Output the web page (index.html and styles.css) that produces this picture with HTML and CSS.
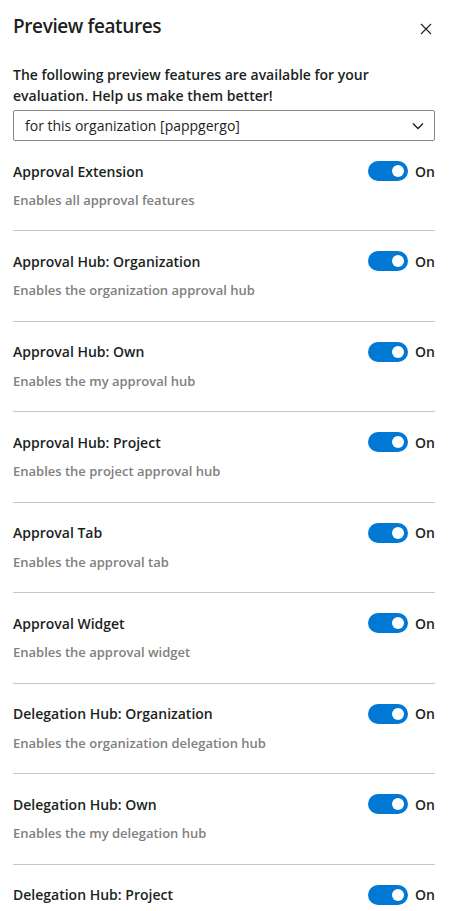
FILE: index.html
```html
<!DOCTYPE html>
<html lang="en">
<head>
    <meta charset="UTF-8">
    <meta name="viewport" content="width=device-width, initial-scale=1.0">
    <title>Preview features</title>
    <link rel="stylesheet" href="styles.css">
</head>
<body>
    <div class="panel">
        <div class="header">
            <div class="title">Preview features</div>
            <button class="close" aria-label="Close">
                <svg width="12" height="12" viewBox="0 0 12 12"><path d="M1 1 L11 11 M11 1 L1 11" stroke="#201f1e" stroke-width="1.1" fill="none"/></svg>
            </button>
        </div>

        <p class="intro">The following preview features are available for your evaluation. Help us make them better!</p>

        <div class="dropdown">
            <span>for this organization [pappgergo]</span>
            <svg width="14" height="14" viewBox="0 0 14 14"><path d="M2 4.5 L7 9.5 L12 4.5" stroke="#201f1e" stroke-width="1.4" fill="none"/></svg>
        </div>

        <div class="features">
            <div class="feature">
                <div class="feature-head">
                    <div class="feature-name">Approval Extension</div>
                    <div class="toggle"><span class="track"><span class="knob"></span></span>On</div>
                </div>
                <div class="feature-desc">Enables all approval features</div>
            </div>
            <div class="feature">
                <div class="feature-head">
                    <div class="feature-name">Approval Hub: Organization</div>
                    <div class="toggle"><span class="track"><span class="knob"></span></span>On</div>
                </div>
                <div class="feature-desc">Enables the organization approval hub</div>
            </div>
            <div class="feature">
                <div class="feature-head">
                    <div class="feature-name">Approval Hub: Own</div>
                    <div class="toggle"><span class="track"><span class="knob"></span></span>On</div>
                </div>
                <div class="feature-desc">Enables the my approval hub</div>
            </div>
            <div class="feature">
                <div class="feature-head">
                    <div class="feature-name">Approval Hub: Project</div>
                    <div class="toggle"><span class="track"><span class="knob"></span></span>On</div>
                </div>
                <div class="feature-desc">Enables the project approval hub</div>
            </div>
            <div class="feature">
                <div class="feature-head">
                    <div class="feature-name">Approval Tab</div>
                    <div class="toggle"><span class="track"><span class="knob"></span></span>On</div>
                </div>
                <div class="feature-desc">Enables the approval tab</div>
            </div>
            <div class="feature">
                <div class="feature-head">
                    <div class="feature-name">Approval Widget</div>
                    <div class="toggle"><span class="track"><span class="knob"></span></span>On</div>
                </div>
                <div class="feature-desc">Enables the approval widget</div>
            </div>
            <div class="feature">
                <div class="feature-head">
                    <div class="feature-name">Delegation Hub: Organization</div>
                    <div class="toggle"><span class="track"><span class="knob"></span></span>On</div>
                </div>
                <div class="feature-desc">Enables the organization delegation hub</div>
            </div>
            <div class="feature">
                <div class="feature-head">
                    <div class="feature-name">Delegation Hub: Own</div>
                    <div class="toggle"><span class="track"><span class="knob"></span></span>On</div>
                </div>
                <div class="feature-desc">Enables the my delegation hub</div>
            </div>
            <div class="feature">
                <div class="feature-head">
                    <div class="feature-name">Delegation Hub: Project</div>
                    <div class="toggle"><span class="track"><span class="knob"></span></span>On</div>
                </div>
            </div>
        </div>
    </div>
</body>
</html>
```

FILE: styles.css
```css
body {
    margin: 0;
    padding: 0;
    background-color: #ffffff;
    font-family: "Open Sans", "Noto Sans", sans-serif;
    color: #201f1e;
    overflow: hidden;
}

.panel {
    padding: 0 19px 0 13px;
}

.header {
    display: flex;
    justify-content: space-between;
    align-items: center;
    height: 54px;
}

.title {
    font-size: 19px;
    font-weight: 600;
    letter-spacing: -0.4px;
    margin-top: -2px;
}

.close {
    background-color: transparent;
    border: none;
    padding: 0;
    margin: 4px 3px 0 0;
    display: flex;
    cursor: pointer;
}

.intro {
    margin: 10px 0 4px;
    font-size: 14px;
    font-weight: 600;
    line-height: 21px;
}

.dropdown {
    height: 29px;
    border: 1px solid #8a8886;
    border-radius: 2px;
    display: flex;
    justify-content: space-between;
    align-items: center;
    padding: 0 10px 0 11px;
    font-size: 14px;
}

.dropdown svg {
    margin-right: -1px;
}

.feature {
    padding: 20px 0;
    border-bottom: 1px solid #c8c6c4;
}

.feature-head {
    display: flex;
    justify-content: space-between;
    align-items: center;
    height: 20px;
}

.feature-name {
    font-size: 14px;
    font-weight: 600;
}

.toggle {
    display: flex;
    align-items: center;
    gap: 7px;
    font-size: 14px;
    font-weight: 600;
}

.track {
    width: 40px;
    height: 20px;
    border-radius: 10px;
    background-color: #0078d4;
    display: flex;
    align-items: center;
    justify-content: flex-end;
    padding-right: 4px;
    box-sizing: border-box;
}

.knob {
    width: 12px;
    height: 12px;
    border-radius: 50%;
    background-color: #ffffff;
}

.feature-desc {
    margin-top: 10px;
    font-size: 13px;
    font-weight: 600;
    line-height: 19.43px;
    color: #808080;
}
```
